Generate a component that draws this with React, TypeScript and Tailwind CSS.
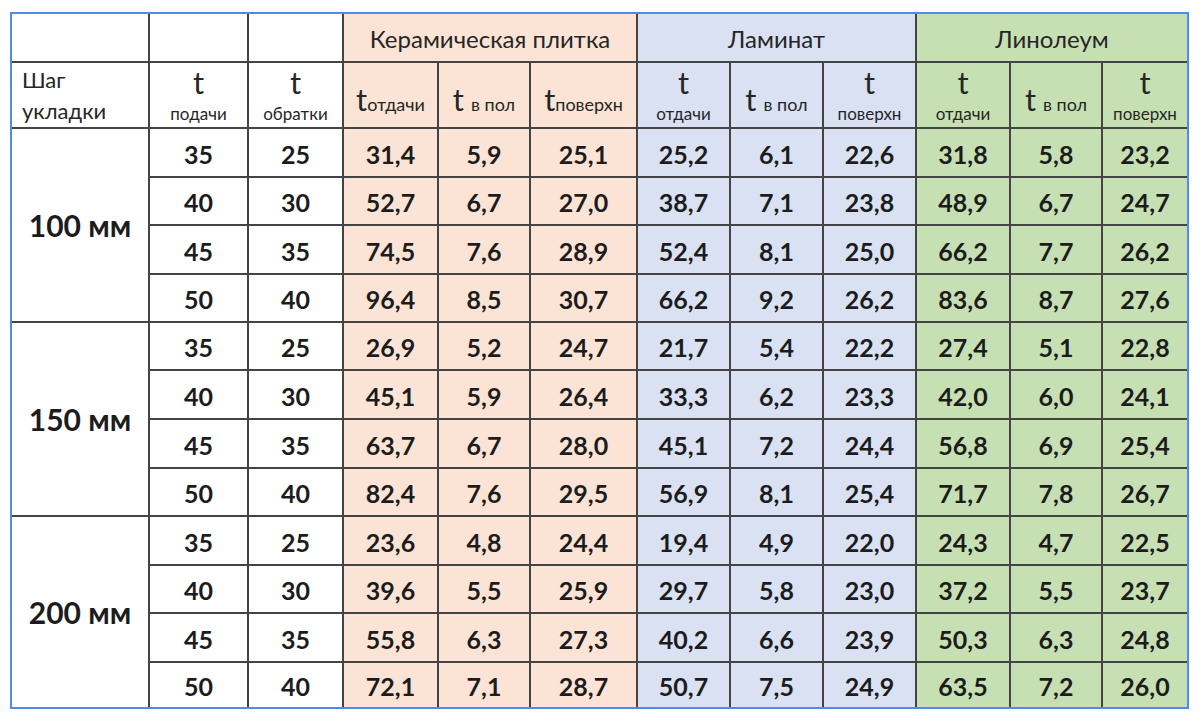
const groups = [
  {
    label: '100 мм',
    rows: [
      ['35', '25', '31,4', '5,9', '25,1', '25,2', '6,1', '22,6', '31,8', '5,8', '23,2'],
      ['40', '30', '52,7', '6,7', '27,0', '38,7', '7,1', '23,8', '48,9', '6,7', '24,7'],
      ['45', '35', '74,5', '7,6', '28,9', '52,4', '8,1', '25,0', '66,2', '7,7', '26,2'],
      ['50', '40', '96,4', '8,5', '30,7', '66,2', '9,2', '26,2', '83,6', '8,7', '27,6'],
    ],
  },
  {
    label: '150 мм',
    rows: [
      ['35', '25', '26,9', '5,2', '24,7', '21,7', '5,4', '22,2', '27,4', '5,1', '22,8'],
      ['40', '30', '45,1', '5,9', '26,4', '33,3', '6,2', '23,3', '42,0', '6,0', '24,1'],
      ['45', '35', '63,7', '6,7', '28,0', '45,1', '7,2', '24,4', '56,8', '6,9', '25,4'],
      ['50', '40', '82,4', '7,6', '29,5', '56,9', '8,1', '25,4', '71,7', '7,8', '26,7'],
    ],
  },
  {
    label: '200 мм',
    rows: [
      ['35', '25', '23,6', '4,8', '24,4', '19,4', '4,9', '22,0', '24,3', '4,7', '22,5'],
      ['40', '30', '39,6', '5,5', '25,9', '29,7', '5,8', '23,0', '37,2', '5,5', '23,7'],
      ['45', '35', '55,8', '6,3', '27,3', '40,2', '6,6', '23,9', '50,3', '6,3', '24,8'],
      ['50', '40', '72,1', '7,1', '28,7', '50,7', '7,5', '24,9', '63,5', '7,2', '26,0'],
    ],
  },
]

const rowHeights = [49, 48, 49, 48, 48, 49, 49, 48, 49, 48, 49, 45]
const colWidths = [137, 99, 95, 95, 92, 107, 93, 93, 93, 94, 92, 85]

// background for the 11 value columns of a data row
function bgFor(i: number) {
  if (i < 2) return 'bg-white'
  if (i < 5) return 'bg-[#fbe4d5]'
  if (i < 8) return 'bg-[#d9e1f3]'
  return 'bg-[#c6e0b4]'
}

const line = 'border-2 border-[#444]'

function Stacked({ sub }: { sub: string }) {
  return (
    <div className="-mt-[2px] flex flex-col items-center leading-none">
      <span className="text-[31px] leading-none">t</span>
      <span className="mt-[7px] text-[17px] leading-none">{sub}</span>
    </div>
  )
}

function Inline({ sub, gap }: { sub: string; gap?: boolean }) {
  return (
    <div className="mt-[8px] flex items-baseline justify-center leading-none">
      <span className="text-[31px] leading-none">t</span>
      <span className={`text-[18px] leading-none ${gap ? 'ml-[7px]' : ''}`}>{sub}</span>
    </div>
  )
}

export default function App() {
  let rowIndex = 0
  return (
    <div className="min-h-[716px] w-[1200px] bg-white pl-[10px] pt-[12px] font-[Lato,sans-serif] text-[#1c1c1c]">
      <div className="w-[1179px] border-2 border-[#4f8be8]">
        <table className="w-[1175px] table-fixed border-collapse">
          <colgroup>
            {colWidths.map((w, i) => (
              <col key={i} style={{ width: w }} />
            ))}
          </colgroup>
          <thead>
            <tr className="h-[48px] text-[24px] font-normal text-[#262626]">
              <th className={`${line} border-t-0 border-l-0 bg-white`} />
              <th className={`${line} border-t-0 bg-white`} />
              <th className={`${line} border-t-0 bg-white`} />
              <th colSpan={3} className={`${line} border-t-0 bg-[#fbe4d5] pt-[2px] font-normal`}>
                Керамическая плитка
              </th>
              <th colSpan={3} className={`${line} border-t-0 bg-[#d9e1f3] pt-[2px] font-normal`}>
                Ламинат
              </th>
              <th colSpan={3} className={`${line} border-t-0 border-r-0 bg-[#c6e0b4] pt-[2px] font-normal`}>
                Линолеум
              </th>
            </tr>
            <tr className="h-[66px] font-normal text-[#262626]">
              <th className={`${line} border-l-0 bg-white px-[10px] text-left align-middle text-[22px] font-normal leading-[31px]`}>
                Шаг
                <br />
                укладки
              </th>
              <th className={`${line} bg-white font-normal`}>
                <Stacked sub="подачи" />
              </th>
              <th className={`${line} bg-white font-normal`}>
                <Stacked sub="обратки" />
              </th>
              <th className={`${line} bg-[#fbe4d5] font-normal`}>
                <Inline sub="отдачи" />
              </th>
              <th className={`${line} bg-[#fbe4d5] font-normal`}>
                <Inline sub="в пол" gap />
              </th>
              <th className={`${line} bg-[#fbe4d5] font-normal`}>
                <Inline sub="поверхн" />
              </th>
              <th className={`${line} bg-[#d9e1f3] font-normal`}>
                <Stacked sub="отдачи" />
              </th>
              <th className={`${line} bg-[#d9e1f3] font-normal`}>
                <Inline sub="в пол" gap />
              </th>
              <th className={`${line} bg-[#d9e1f3] font-normal`}>
                <Stacked sub="поверхн" />
              </th>
              <th className={`${line} bg-[#c6e0b4] font-normal`}>
                <Stacked sub="отдачи" />
              </th>
              <th className={`${line} bg-[#c6e0b4] font-normal`}>
                <Inline sub="в пол" gap />
              </th>
              <th className={`${line} border-r-0 bg-[#c6e0b4] font-normal`}>
                <Stacked sub="поверхн" />
              </th>
            </tr>
          </thead>
          <tbody className="text-[25px] font-bold">
            {groups.map((g, gi) =>
              g.rows.map((r, ri) => {
                const h = rowHeights[rowIndex++]
                const last = gi === groups.length - 1 && ri === g.rows.length - 1
                return (
                  <tr key={`${gi}-${ri}`} style={{ height: h }}>
                    {ri === 0 && (
                      <td
                        rowSpan={4}
                        className={`${line} border-l-0 ${gi === groups.length - 1 ? 'border-b-0' : ''} bg-white text-center text-[30px]`}
                      >
                        {g.label}
                      </td>
                    )}
                    {r.map((v, ci) => (
                      <td
                        key={ci}
                        className={`${line} ${last ? 'border-b-0' : ''} ${ci === r.length - 1 ? 'border-r-0' : ''} ${bgFor(ci)} pt-[3px] text-center leading-none`}
                      >
                        {v}
                      </td>
                    ))}
                  </tr>
                )
              }),
            )}
          </tbody>
        </table>
      </div>
    </div>
  )
}
